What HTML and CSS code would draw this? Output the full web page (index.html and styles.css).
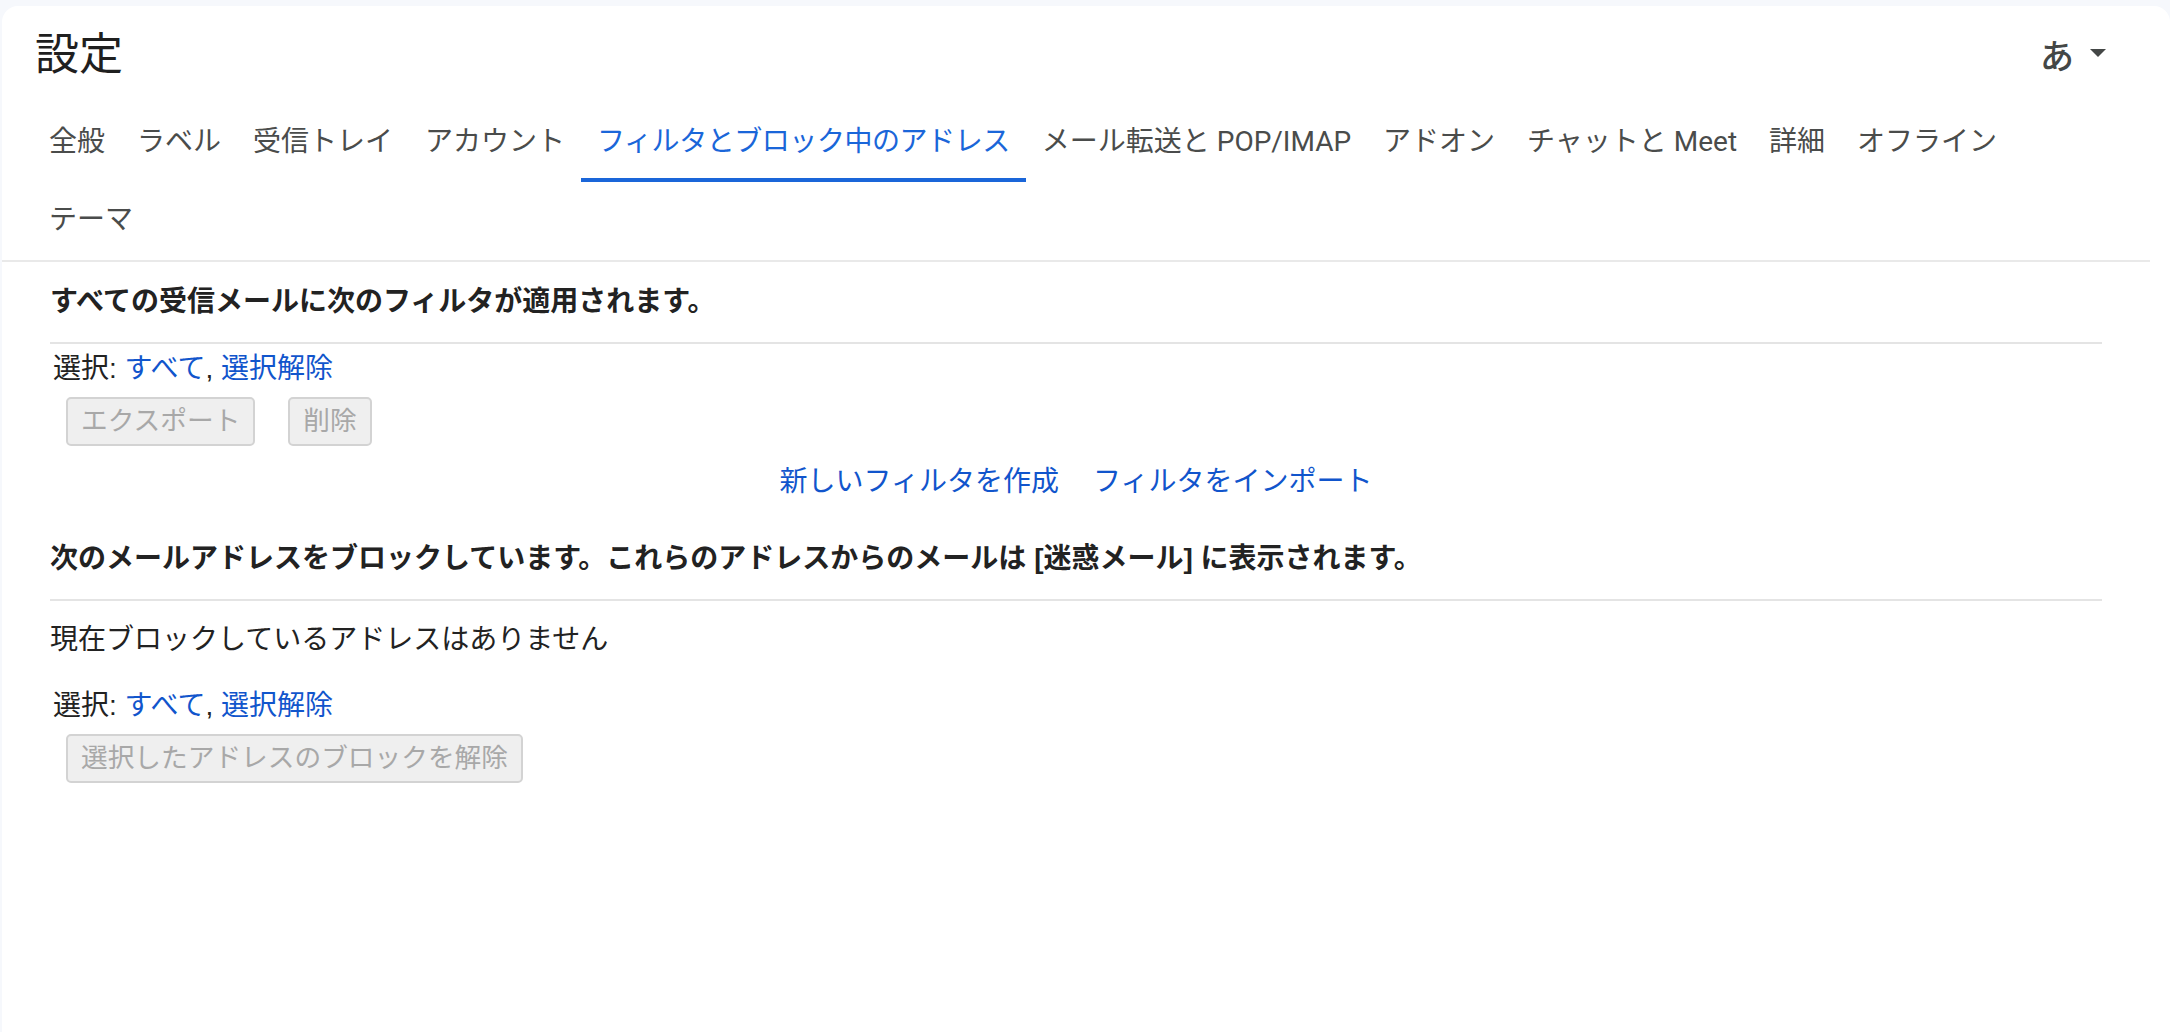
FILE: index.html
```html
<!DOCTYPE html>
<html lang="ja">
<head>
<meta charset="utf-8">
<title>設定</title>
<link rel="stylesheet" href="styles.css">
</head>
<body>
<div class="panel">
  <div class="inner">
    <header class="header">
      <h1 class="title">設定</h1>
      <div class="ime"><span class="ime-char">あ</span><span class="caret"></span></div>
    </header>
    <nav class="tabs">
      <a class="tab">全般</a>
      <a class="tab">ラベル</a>
      <a class="tab">受信トレイ</a>
      <a class="tab">アカウント</a>
      <a class="tab active">フィルタとブロック中のアドレス</a>
      <a class="tab">メール転送と POP/IMAP</a>
      <a class="tab">アドオン</a>
      <a class="tab">チャットと Meet</a>
      <a class="tab">詳細</a>
      <a class="tab">オフライン</a>
      <a class="tab">テーマ</a>
    </nav>
    <main class="content">
      <h2 class="heading h1st">すべての受信メールに次のフィルタが適用されます。</h2>
      <div class="rule r1"></div>
      <div class="select s1">選択: <a class="link">すべて</a>, <a class="link">選択解除</a></div>
      <div class="buttons">
        <button class="btn" disabled>エクスポート</button>
        <button class="btn" disabled>削除</button>
      </div>
      <div class="actions">
        <a class="link">新しいフィルタを作成</a>
        <a class="link">フィルタをインポート</a>
      </div>
      <h2 class="heading h2nd">次のメールアドレスをブロックしています。これらのアドレスからのメールは [迷惑メール] に表示されます。</h2>
      <div class="rule r2"></div>
      <p class="empty">現在ブロックしているアドレスはありません</p>
      <div class="select s2">選択: <a class="link">すべて</a>, <a class="link">選択解除</a></div>
      <div class="buttons">
        <button class="btn" disabled>選択したアドレスのブロックを解除</button>
      </div>
    </main>
  </div>
</div>
</body>
</html>
```

FILE: styles.css
```css
html, body {
  margin: 0;
  padding: 0;
  background: #f6f8fc;
}

body {
  font-family: "Liberation Sans", "Noto Sans CJK JP", sans-serif;
  color: #222;
}

.panel {
  margin: 6px 0 0 2px;
  background: #ffffff;
  border-radius: 16px 16px 0 0;
  min-height: calc(100vh - 6px);
}

.inner {
  width: 2148px;
}

.header {
  height: 98px;
  display: flex;
  align-items: center;
  justify-content: space-between;
  padding: 0 44px 0 33px;
  box-sizing: border-box;
}

.title {
  margin: 0;
  font-family: Roboto, "Noto Sans CJK JP", sans-serif;
  font-size: 44px;
  line-height: 1;
  font-weight: 400;
  color: #1f1f1f;
}

.ime {
  display: flex;
  align-items: center;
  gap: 16px;
  color: #444746;
}

.ime-char {
  font-family: Roboto, "Noto Sans CJK JP", sans-serif;
  font-size: 34px;
  line-height: 1;
  font-weight: 500;
  margin-top: 4px;
}

.caret {
  width: 0;
  height: 0;
  border-left: 8px solid transparent;
  border-right: 8px solid transparent;
  border-top: 8px solid #444746;
  margin-bottom: 4px;
}

.tabs {
  display: flex;
  flex-wrap: wrap;
  padding: 0 50px 0 31px;
  border-bottom: 2px solid #e9e9e9;
}

.tab {
  height: 78px;
  line-height: 76px;
  box-sizing: border-box;
  padding: 0 16px;
  font-family: Roboto, "Noto Sans CJK JP", sans-serif;
  font-size: 28px;
  color: #4a4c4b;
  white-space: nowrap;
}

.tab.active {
  color: #1a66d9;
  letter-spacing: -0.45px;
  box-shadow: inset 0 -4px 0 #1a66d9;
}

.content {
  padding: 0 48px;
  font-size: 28px;
  line-height: 40px;
}

.heading {
  margin: 0;
  font-size: 28px;
  line-height: 40px;
  font-weight: 700;
  color: #222;
}

.h1st { margin-top: 20px; }
.h2nd { margin-top: 37px; }

.rule {
  height: 2px;
  background: #e4e4e4;
}

.r1 { margin-top: 20px; }
.r2 { margin-top: 20px; }

.select {
  padding-left: 3px;
  color: #222;
}

.s1 { margin-top: 5px; }
.s2 { margin-top: 26px; }

.link {
  color: #1155cc;
  text-decoration: none;
}

.buttons {
  display: flex;
  gap: 33px;
  margin-top: 8px;
  padding-left: 16px;
}

.btn {
  font-family: "Liberation Sans", "Noto Sans CJK JP", sans-serif;
  font-size: 26.7px;
  line-height: 41px;
  padding: 2px 13px;
  border: 2px solid #d3d3d3;
  border-radius: 5px;
  background: #efefef;
  color: #a8a8a8;
}

.actions {
  display: flex;
  justify-content: center;
  gap: 34px;
  margin-top: 16px;
}

.empty {
  margin: 19px 0 0;
  color: #222;
}
```
